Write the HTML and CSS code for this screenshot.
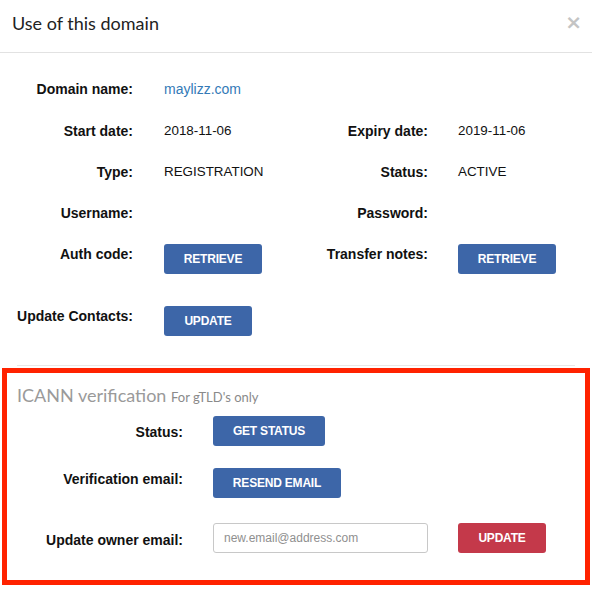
FILE: index.html
```html
<!DOCTYPE html>
<html lang="en">
<head>
  <meta charset="UTF-8" />
  <title>Use of this domain</title>
  <link rel="stylesheet" href="styles.css">
</head>
<body>
<div class="modal">
  <div class="modal-header">
    <h1>Use of this domain</h1>
    <span class="close">&times;</span>
  </div>

  <div class="modal-body">
    <div class="info-grid">
      <div class="label">Domain name:</div>
      <div class="value"><a href="#">maylizz.com</a></div>
      <div class="label"></div>
      <div class="value"></div>

      <div class="label">Start date:</div>
      <div class="value">2018-11-06</div>
      <div class="label">Expiry date:</div>
      <div class="value">2019-11-06</div>

      <div class="label">Type:</div>
      <div class="value">REGISTRATION</div>
      <div class="label">Status:</div>
      <div class="value">ACTIVE</div>

      <div class="label">Username:</div>
      <div class="value"></div>
      <div class="label">Password:</div>
      <div class="value"></div>

      <div class="label">Auth code:</div>
      <div class="value"><button class="btn btn-retrieve">RETRIEVE</button></div>
      <div class="label">Transfer notes:</div>
      <div class="value"><button class="btn btn-retrieve">RETRIEVE</button></div>
    </div>

    <div class="contacts-row">
      <div class="label">Update Contacts:</div>
      <div class="value"><button class="btn btn-update">UPDATE</button></div>
    </div>

    <div class="divider"></div>
  </div>

  <div class="icann">
    <h2>ICANN verification <small>For gTLD's only</small></h2>
    <div class="icann-row">
      <div class="label">Status:</div>
      <button class="btn btn-status">GET STATUS</button>
    </div>
    <div class="icann-row resend-row">
      <div class="label">Verification email:</div>
      <button class="btn btn-resend">RESEND EMAIL</button>
    </div>
    <div class="icann-row owner-row">
      <div class="label">Update owner email:</div>
      <input type="text" placeholder="new.email@address.com" />
      <button class="btn btn-danger">UPDATE</button>
    </div>
  </div>
</div>
</body>
</html>
```

FILE: styles.css
```css
* {
  margin: 0;
  padding: 0;
  box-sizing: border-box;
}
body {
  background: #fff;
  font-family: "Liberation Sans", Arial, sans-serif;
  font-size: 13.4px;
  color: #111;
}
.modal {
  width: 592px;
}
.modal-header {
  height: 53px;
  border-bottom: 1px solid #e2e2e2;
  display: flex;
  justify-content: space-between;
  align-items: flex-start;
  padding: 12px 10px 0 12px;
}
.modal-header h1 {
  font-family: "Lato", sans-serif;
  font-weight: 400;
  font-size: 18px;
  color: #222;
  line-height: 22px;
}
.close {
  font-family: "DejaVu Sans", sans-serif;
  font-size: 20px;
  font-weight: bold;
  color: #c4c4c4;
  line-height: 20px;
}
.modal-body {
  padding-top: 26px;
}
.info-grid {
  display: grid;
  grid-template-columns: 164px 136px 158px 1fr;
  row-gap: 21px;
}
.label {
  font-weight: bold;
  font-size: 14px;
  line-height: 20px;
  text-align: right;
}
.info-grid .label:nth-child(4n+1) {
  padding-right: 31px;
}
.info-grid .label:nth-child(4n+3) {
  padding-right: 30px;
}
.value {
  line-height: 20px;
}
.value a {
  color: #337ab7;
  text-decoration: none;
  font-size: 14px;
}
.btn {
  background: #3d66a8;
  color: #fff;
  border: none;
  border-radius: 3px;
  font-family: "Liberation Sans", Arial, sans-serif;
  font-weight: bold;
  font-size: 12px;
  height: 30px;
  letter-spacing: -0.2px;
  cursor: pointer;
}
.btn-retrieve {
  width: 98px;
}
.btn-update {
  width: 88px;
}
.contacts-row {
  display: grid;
  grid-template-columns: 164px 1fr;
  margin-top: 32px;
}
.contacts-row .label {
  padding-right: 31px;
}
.divider {
  border-top: 1px solid #e8e8e8;
  margin: 29px 17px 0 17px;
}
.icann {
  margin: 2px 2px 0 2px;
  width: 588px;
  height: 217px;
  border: 5px solid #ff2200;
  padding: 11px 10px 0 10px;
}
.icann h2 {
  font-family: "Lato", sans-serif;
  font-weight: 400;
  font-size: 18px;
  color: #9a9a9a;
  line-height: 22px;
}
.icann h2 small {
  font-size: 13px;
  color: #8a8a8a;
}
.icann-row {
  display: flex;
  align-items: flex-start;
  margin-top: 8px;
}
.icann-row + .icann-row {
  margin-top: 22px;
}
.icann-row .label {
  width: 169px;
  padding-right: 3px;
  padding-top: 6px;
}
.icann-row.resend-row .label {
  padding-top: 1px;
}
.icann-row .btn {
  margin-left: 27px;
}
.btn-status {
  width: 112px;
}
.btn-resend {
  width: 128px;
}
.owner-row {
  align-items: center;
}
.icann-row.owner-row {
  margin-top: 25px;
}
.owner-row .label {
  padding-top: 4px;
}
.owner-row input {
  margin-left: 27px;
  width: 215px;
  height: 30px;
  border: 1px solid #c8c8c8;
  border-radius: 3px;
  padding: 0 10px;
  font-family: "Liberation Sans", Arial, sans-serif;
  font-size: 12px;
}
.owner-row input::placeholder {
  color: #8f8f8f;
}
.owner-row .btn-danger {
  background: #c4394a;
  width: 88px;
  margin-left: 30px;
}
```
